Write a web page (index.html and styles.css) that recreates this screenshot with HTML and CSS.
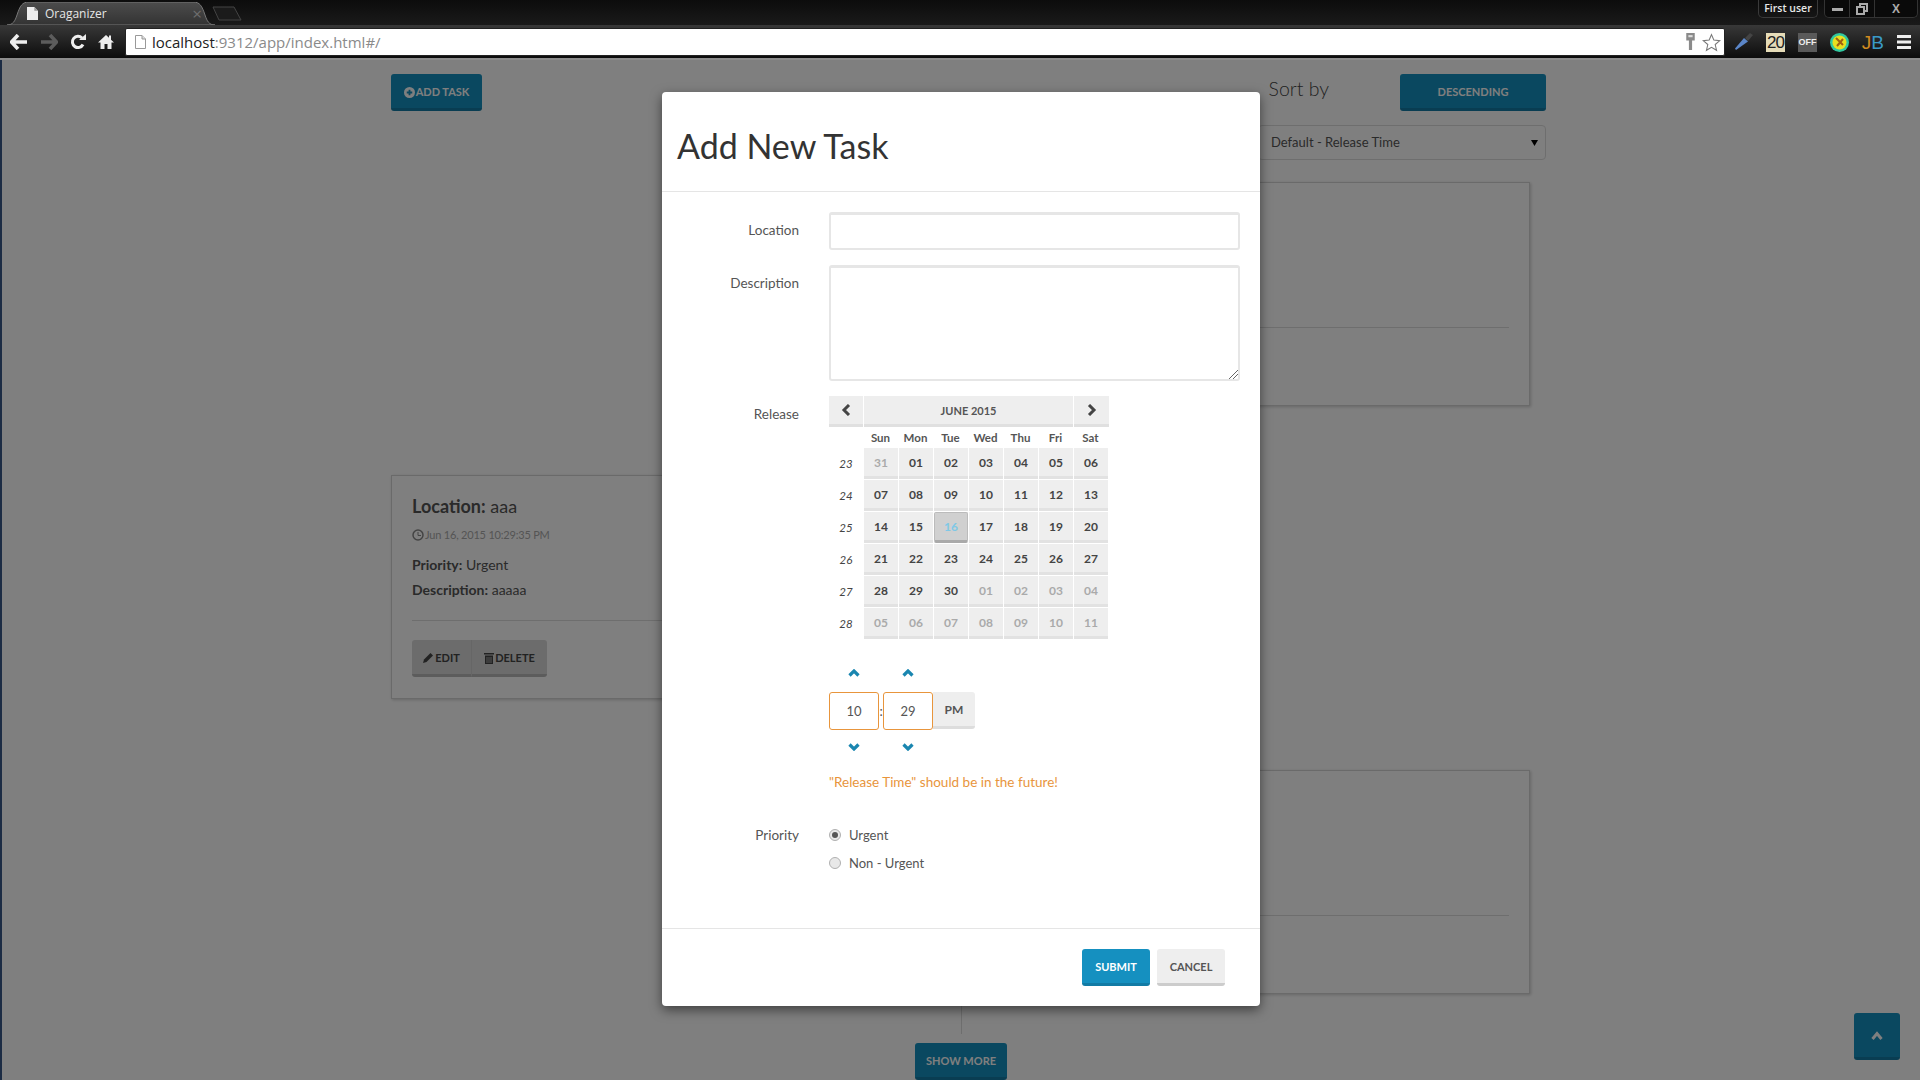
FILE: index.html
```html
<!DOCTYPE html>
<html lang="en">
<head>
    <meta charset="UTF-8">
    <title>Oraganizer</title>
    <link rel="stylesheet" href="styles.css">
</head>
<body>
    <!-- browser chrome -->
    <div class="tabstrip">
        <div class="tab">
            <svg class="tab-shape" width="208" height="23" viewBox="0 0 208 23"><path d="M0 23C6 23 8 19 10 13 13 4 15 0 22 0L186 0C193 0 195 4 198 13 200 19 202 23 208 23Z" fill="url(#tabfill)" stroke="#777"/><defs><linearGradient id="tabfill" x1="0" y1="0" x2="0" y2="1"><stop offset="0" stop-color="#4c4c4c"/><stop offset="1" stop-color="#333"/></linearGradient></defs></svg>
            <svg class="tab-icon" width="11" height="13" viewBox="0 0 12 14"><path d="M0 0H8L12 4V14H0Z" fill="#eee"/><path d="M8 0V4H12" fill="#999"/></svg>
            <span class="tab-title">Oraganizer</span>
            <span class="tab-close">×</span>
        </div>
        <svg class="newtab" width="30" height="15" viewBox="0 0 30 15"><path d="M1 1H22L29 14H7Z" fill="#1b1b1b" stroke="#444"/></svg>
        <div class="user-btn">First user</div>
        <div class="win-btns">
            <span class="win-btn min"><svg width="11" height="4" viewBox="0 0 11 4"><rect width="11" height="3" y="1" fill="#aaa"/></svg></span>
            <span class="win-btn max"><svg width="12" height="12" viewBox="0 0 12 12"><path d="M1 4H8V11H1ZM4 4V1H11V8H8" fill="none" stroke="#aaa" stroke-width="2"/></svg></span>
            <span class="win-btn close">X</span>
        </div>
    </div>
    <div class="toolbar">
        <div class="nav-icons">
            <svg width="18" height="16" viewBox="0 0 18 16"><path d="M8 1L1.500 8 8 15M2 8H17" fill="none" stroke="#eee" stroke-width="3.600"/></svg>
            <svg width="18" height="16" viewBox="0 0 18 16"><path d="M10 1L16.500 8 10 15M16 8H1" fill="none" stroke="#5c5c5c" stroke-width="3.600"/></svg>
            <svg width="16" height="16" viewBox="0 0 16 16"><path d="M13 10.500A5.600 5.600 0 1 1 12 4" fill="none" stroke="#eee" stroke-width="3"/><path d="M9 6H16V0Z" fill="#eee"/></svg>
            <svg width="16" height="16" viewBox="0 0 16 16"><path d="M8 1L0 8.500H2.500V15H6.500V10H9.500V15H13.500V8.500H16L13 5.700V1.500H11V3.800Z" fill="#eee"/></svg>
        </div>
        <div class="addressbar">
            <svg width="11" height="14" viewBox="0 0 11 14"><path d="M.5.500H7L10.500 4V13.500H.5Z" fill="#fff" stroke="#999"/><path d="M7 .5V4H10.500" fill="#ddd" stroke="#999"/></svg>
            <span class="url"><span class="url-host">localhost</span>:9312/app/index.html#/</span>
            <svg class="key" width="11" height="18" viewBox="0 0 10 17"><path d="M1 0H9V7H6.500V16H3.500V7H1Z" fill="#8a8a8a"/><rect x="3" y="2" width="4" height="2" fill="#ddd"/></svg>
            <svg width="19" height="19" viewBox="0 0 18 18"><path d="M9 1.500L11.200 6.700 16.800 7.200 12.500 10.900 13.800 16.400 9 13.500 4.200 16.400 5.500 10.900 1.200 7.200 6.800 6.700Z" fill="#fff" stroke="#777"/></svg>
        </div>
        <div class="ext-icons">
            <svg width="18" height="18" viewBox="0 0 18 18"><path d="M1 17L0 15.500 9 5 13 8.500Z" fill="#5b86c8"/><path d="M10 5L15 0 18 2 13 8Z" fill="#444"/></svg>
            <span class="ext-20">20</span>
            <span class="ext-off">OFF</span>
            <svg width="19" height="19" viewBox="0 0 19 19"><circle cx="9.500" cy="9.500" r="9.500" fill="#30c8a0"/><circle cx="9.500" cy="9.500" r="7" fill="#e8e020"/><path d="M6 5L13 12M13 6L7 13" stroke="#a06010" stroke-width="2"/></svg>
            <span class="ext-jb"><span class="j">J</span><span class="b">B</span></span>
            <svg width="14" height="14" viewBox="0 0 14 14"><path d="M0 0H14V3H0ZM0 5.500H14V8.500H0ZM0 11H14V14H0Z" fill="#eee"/></svg>
        </div>
    </div>

    <div class="viewport">
        <!-- app behind the dialog -->
        <div class="app">
            <div class="columns">
                <div class="col-left">
                    <button class="btn btn-blue btn-add"><svg class="ico" width="11" height="11" viewBox="0 0 12 12"><circle cx="6" cy="6" r="6" fill="#fff"/><path d="M3 6H9M6 3V9" stroke="#1590c0" stroke-width="2"/></svg>ADD TASK</button>
                    <div class="card card-left">
                        <h3 class="card-title"><b>Location:</b> aaa</h3>
                        <div class="card-date"><svg class="ico" width="12" height="12" viewBox="0 0 12 12"><circle cx="6" cy="6" r="5" fill="none" stroke="#888" stroke-width="1.500"/><path d="M6 3V6.500H9" fill="none" stroke="#888"/></svg>Jun 16, 2015 10:29:35 PM</div>
                        <div class="card-line"><b>Priority:</b> Urgent</div>
                        <div class="card-line"><b>Description:</b> aaaaa</div>
                        <hr class="card-rule">
                        <div class="btn-group">
                            <button class="btn btn-grey"><svg class="ico" width="11" height="11" viewBox="0 0 11 11"><path d="M0 11L1 7.500 7.500 1 10 3.500 3.500 10Z" fill="#444"/></svg>EDIT</button>
                            <button class="btn btn-grey"><svg class="ico" width="10" height="12" viewBox="0 0 10 12"><path d="M0 1H10V2.500H0ZM1 3.500H9V12H1Z" fill="#444"/><path d="M3 5V11M5 5V11M7 5V11" stroke="#ddd" stroke-width=".7"/></svg>DELETE</button>
                        </div>
                    </div>
                </div>
                <div class="col-right">
                    <div class="sort-row">
                        <span class="sort-label">Sort by</span>
                        <button class="btn btn-blue btn-sort">DESCENDING</button>
                    </div>
                    <div class="sort-select">Default - Release Time<svg class="sort-arrow" width="7" height="6" viewBox="0 0 7 6"><path d="M0 0H7L3.500 6Z"/></svg></div>
                    <div class="card card-right"><hr class="card-rule"></div>
                    <div class="card card-right card-second"><hr class="card-rule"></div>
                </div>
            </div>
            <div class="more">
                <div class="more-line"></div>
                <button class="btn btn-blue btn-more">SHOW MORE</button>
            </div>
        </div>
        <button class="btn btn-blue btn-top"><svg width="12" height="9" viewBox="0 0 12 9"><path d="M1.500 8L6 2.500 10.500 8" fill="none" stroke="#fff" stroke-width="3"/></svg></button>
        <div class="overlay"></div>

        <!-- dialog -->
        <div class="modal">
            <div class="modal-header"><h1 class="modal-title">Add New Task</h1></div>
            <div class="modal-body">
                <div class="field">
                    <label class="field-label">Location</label>
                    <input class="input input-line" type="text">
                </div>
                <div class="field">
                    <label class="field-label">Description</label>
                    <div class="textarea"><svg class="grip" width="9" height="9" viewBox="0 0 9 9"><path d="M0 9L9 0M4 9L9 4" stroke="#666"/></svg></div>
                </div>
                <div class="field">
                    <label class="field-label">Release</label>
                    <div class="release">
                        <div class="cal">
                            <div class="cal-nav"><svg width="10" height="12" viewBox="0 0 10 12"><path d="M8 1L3 6 8 11" fill="none" stroke="#444" stroke-width="3"/></svg></div>
                            <div class="cal-nav cal-month">JUNE 2015</div>
                            <div class="cal-nav"><svg width="10" height="12" viewBox="0 0 10 12"><path d="M2 1L7 6 2 11" fill="none" stroke="#444" stroke-width="3"/></svg></div>
                        </div>
                        <div class="cal-grid">
                            <span></span><span class="dow">Sun</span><span class="dow">Mon</span><span class="dow">Tue</span><span class="dow">Wed</span><span class="dow">Thu</span><span class="dow">Fri</span><span class="dow">Sat</span>
                            <span class="wk">23</span><span class="day off">31</span><span class="day">01</span><span class="day">02</span><span class="day">03</span><span class="day">04</span><span class="day">05</span><span class="day">06</span>
                            <span class="wk">24</span><span class="day">07</span><span class="day">08</span><span class="day">09</span><span class="day">10</span><span class="day">11</span><span class="day">12</span><span class="day">13</span>
                            <span class="wk">25</span><span class="day">14</span><span class="day">15</span><span class="day today">16</span><span class="day">17</span><span class="day">18</span><span class="day">19</span><span class="day">20</span>
                            <span class="wk">26</span><span class="day">21</span><span class="day">22</span><span class="day">23</span><span class="day">24</span><span class="day">25</span><span class="day">26</span><span class="day">27</span>
                            <span class="wk">27</span><span class="day">28</span><span class="day">29</span><span class="day">30</span><span class="day off">01</span><span class="day off">02</span><span class="day off">03</span><span class="day off">04</span>
                            <span class="wk">28</span><span class="day off">05</span><span class="day off">06</span><span class="day off">07</span><span class="day off">08</span><span class="day off">09</span><span class="day off">10</span><span class="day off">11</span>
                        </div>
                        <div class="time">
                            <span class="time-arrow"><svg width="12" height="8" viewBox="0 0 12 8"><path d="M1.500 6.500L6 2 10.500 6.500" fill="none" stroke="#1a86b0" stroke-width="3.200"/></svg></span>
                            <span></span>
                            <span class="time-arrow"><svg width="12" height="8" viewBox="0 0 12 8"><path d="M1.500 6.500L6 2 10.500 6.500" fill="none" stroke="#1a86b0" stroke-width="3.200"/></svg></span>
                            <span></span>
                            <span class="time-box">10</span>
                            <span class="time-sep">:</span>
                            <span class="time-box">29</span>
                            <span class="time-pm">PM</span>
                            <span class="time-arrow"><svg width="12" height="8" viewBox="0 0 12 8"><path d="M1.500 1.500L6 6 10.500 1.500" fill="none" stroke="#1a86b0" stroke-width="3.200"/></svg></span>
                            <span></span>
                            <span class="time-arrow"><svg width="12" height="8" viewBox="0 0 12 8"><path d="M1.500 1.500L6 6 10.500 1.500" fill="none" stroke="#1a86b0" stroke-width="3.200"/></svg></span>
                            <span></span>
                        </div>
                        <div class="time-error">"Release Time" should be in the future!</div>
                    </div>
                </div>
                <div class="field field-priority">
                    <label class="field-label">Priority</label>
                    <div class="radios">
                        <div class="radio-row"><span class="radio checked"></span>Urgent</div>
                        <div class="radio-row"><span class="radio"></span>Non - Urgent</div>
                    </div>
                </div>
            </div>
            <div class="modal-footer">
                <button class="btn btn-blue btn-foot">SUBMIT</button>
                <button class="btn btn-light btn-foot">CANCEL</button>
            </div>
        </div>
    </div>
</body>
</html>
```
FILE: styles.css
```css
* {
    box-sizing: border-box;
}
html, body {
    margin: 0;
    padding: 0;
    height: 100%;
    overflow: hidden;
}
body {
    font-family: Lato, "Open Sans", sans-serif;
    font-size: 13px;
    color: #555;
    background: #000;
}
svg {
    display: block;
}

/* browser chrome */
.tabstrip {
    position: relative;
    display: flex;
    align-items: flex-start;
    height: 25px;
    padding-left: 7px;
    background: linear-gradient(#0c0c0c, #1a1a1a);
    color: #eee;
}
.tab {
    position: relative;
    display: flex;
    align-items: center;
    width: 208px;
    height: 23px;
    margin-top: 2px;
    padding-left: 20px;
    font-family: "Open Sans", sans-serif;
    font-size: 12px;
    color: #e6e6e6;
}
.tab-shape {
    position: absolute;
    left: 0;
    top: 0;
}
.tab-icon {
    position: relative;
    margin-right: 7px;
}
.tab-title {
    position: relative;
    flex: 1;
}
.tab-close {
    position: relative;
    margin-right: 13px;
    font-size: 17px;
    line-height: 1;
    color: #6e6e6e;
}
.newtab {
    margin: 6px 0 0 -3px;
}
.user-btn {
    margin-left: auto;
    width: 60px;
    height: 18px;
    border: 1px solid #3a3a3a;
    border-top: none;
    border-radius: 0 0 5px 5px;
    font-family: "Open Sans", sans-serif;
    font-size: 10.500px;
    font-weight: 600;
    line-height: 16px;
    text-align: center;
    color: #e8e8e8;
}
.win-btns {
    display: flex;
    margin: 0 2px 0 6px;
    height: 18px;
    border: 1px solid #333;
    border-top: none;
    border-radius: 0 0 5px 5px;
    background: #0a0a0a;
}
.win-btn {
    display: flex;
    align-items: center;
    justify-content: center;
    height: 17px;
    border-right: 1px solid #333;
}
.win-btn.min, .win-btn.max {
    width: 25px;
}
.win-btn.close {
    width: 42px;
    border-right: none;
    font-family: "Liberation Sans", sans-serif;
    font-size: 12px;
    font-weight: 700;
    color: #aaa;
}
.toolbar {
    display: flex;
    align-items: center;
    height: 35px;
    padding-top: 1px;
    border-bottom: 2px solid #8c8c8c;
    background: linear-gradient(#383838, #0c0c0c);
}
.nav-icons {
    display: flex;
    align-items: center;
    gap: 12px;
    width: 125px;
    padding-left: 10px;
}
.addressbar {
    display: flex;
    align-items: center;
    width: 1600px;
    height: 28px;
    padding: 0 3px 0 9px;
    border: 1px solid #222;
    border-radius: 2px;
    background: #fff;
}
.url {
    flex: 1;
    margin-left: 6px;
    font-family: "Open Sans", sans-serif;
    font-size: 15px;
    color: #8a8a8a;
}
.url-host {
    color: #222;
}
.key {
    margin-right: 6px;
}
.ext-icons {
    display: flex;
    align-items: center;
    justify-content: space-between;
    flex: 1;
    padding: 0 9px 0 10px;
}
.ext-20 {
    width: 19px;
    height: 19px;
    background: #e6dcb8;
    font-family: "Liberation Sans", sans-serif;
    font-size: 17px;
    line-height: 19px;
    text-align: center;
    letter-spacing: -1px;
    color: #222;
}
.ext-off {
    width: 19px;
    height: 19px;
    background: #5a5a5a;
    font-family: "Liberation Sans", sans-serif;
    font-size: 9px;
    font-weight: 700;
    line-height: 19px;
    text-align: center;
    color: #eee;
}
.ext-jb {
    font-family: "Liberation Sans", sans-serif;
    font-size: 19px;
    line-height: 19px;
}
.ext-jb .j {
    color: #d08a20;
}
.ext-jb .b {
    color: #3a9ac8;
}

/* page under the dialog */
.viewport {
    position: relative;
    height: 1020px;
    border-left: 2px solid #1c2c44;
    background: #fff;
    overflow: hidden;
}
.app {
    width: 1155px;
    margin-left: 389px;
    padding-top: 14px;
}
.columns {
    display: flex;
    justify-content: space-between;
}
.col-left {
    width: 560px;
}
.col-right {
    display: flex;
    flex-direction: column;
    width: 566px;
}
.btn {
    border: none;
    border-bottom: 3px solid rgba(0, 0, 0, 0.14);
    border-radius: 3px;
    font-family: Lato, sans-serif;
    font-size: 11px;
    font-weight: 700;
    padding: 1px 0 0;
}
.btn-blue {
    background: #1590c0;
    color: #fff;
}
.btn-light {
    background: #eee;
    color: #555;
}
.btn-grey {
    display: flex;
    align-items: center;
    justify-content: center;
    background: #d8d8d8;
    color: #444;
}
.ico {
    display: inline-block;
    vertical-align: -2px;
    margin-right: 1px;
}
.btn-add {
    width: 91px;
    height: 37px;
}
.sort-row {
    display: flex;
    justify-content: flex-end;
    align-items: center;
    height: 37px;
}
.sort-label {
    margin-right: 71px;
    padding-bottom: 8px;
    font-size: 19.500px;
    font-weight: 300;
    color: #444;
}
.btn-sort {
    width: 146px;
    height: 37px;
}
.sort-select {
    display: flex;
    align-items: center;
    justify-content: space-between;
    align-self: flex-end;
    width: 288px;
    height: 35px;
    margin-top: 14px;
    padding: 0 7px 2px 12px;
    border: 1px solid #ddd;
    border-radius: 4px;
    font-size: 13px;
    color: #555;
}
.sort-arrow {
    margin-top: 2px;
}
.card {
    border: 1px solid #d4d4d4;
    box-shadow: 1px 1px 3px rgba(0, 0, 0, 0.2);
}
.card-left {
    height: 224px;
    margin-top: 364px;
    padding: 19px 20px;
}
.card-right {
    position: relative;
    height: 224px;
    margin: 22px 16px 0 0;
    padding: 144px 20px 0;
}
.card-second {
    margin-top: 364px;
}
.card-title {
    margin: 0;
    font-size: 18px;
    font-weight: 400;
    line-height: 22px;
    color: #555;
}
.card-date {
    margin: 10px 0 9px;
    font-size: 11px;
    letter-spacing: -0.2px;
    line-height: 16px;
    color: #aaa;
}
.card-line {
    font-size: 14px;
    line-height: 25px;
    color: #555;
}
.card-rule {
    margin: 0;
    border: none;
    border-top: 1px solid #ddd;
}
.card-left .card-rule {
    margin-top: 18px;
}
.btn-group {
    display: flex;
    width: 135px;
    margin-top: 19px;
}
.btn-group .btn {
    height: 37px;
}
.btn-group .btn:first-child {
    width: 60px;
    border-radius: 3px 0 0 3px;
    border-right: 1px solid #ccc;
}
.btn-group .btn:last-child {
    width: 75px;
    border-radius: 0 3px 3px 0;
}
.more {
    display: flex;
    flex-direction: column;
    align-items: center;
    padding-right: 15px;
}
.more-line {
    width: 1px;
    height: 40px;
    background: #ddd;
}
.btn-more {
    width: 92px;
    height: 37px;
    margin-top: 9px;
}
.btn-top {
    position: absolute;
    left: 1852px;
    top: 953px;
    display: flex;
    align-items: center;
    justify-content: center;
    width: 46px;
    height: 47px;
}
.overlay {
    position: absolute;
    inset: 0;
    background: rgba(0, 0, 0, 0.5);
}

/* dialog */
.modal {
    position: absolute;
    left: 660px;
    top: 32px;
    width: 598px;
    height: 914px;
    display: flex;
    flex-direction: column;
    border-radius: 4px;
    background: #fff;
    box-shadow: 0 4px 12px rgba(0, 0, 0, 0.5);
}
.modal-header {
    height: 100px;
    padding: 29px 15px 0;
    border-bottom: 1px solid #e5e5e5;
}
.modal-title {
    margin: 0;
    font-size: 34px;
    font-weight: 400;
    line-height: 50px;
    color: #333;
}
.modal-body {
    flex: 1;
    padding-top: 20px;
}
.field {
    display: flex;
    margin-bottom: 15px;
}
.field-label {
    width: 137px;
    margin-right: 30px;
    padding-top: 9px;
    font-size: 13.500px;
    line-height: 18px;
    text-align: right;
    color: #555;
}
.input-line {
    display: block;
    width: 411px;
    height: 38px;
    border: 2px solid #e6e6e6;
    border-top-width: 3px;
    border-radius: 3px;
    outline: none;
}
.textarea {
    position: relative;
    width: 411px;
    height: 116px;
    border: 2px solid #e6e6e6;
    border-top-width: 3px;
    border-radius: 3px;
}
.grip {
    position: absolute;
    right: 0;
    bottom: 0;
}
.release {
    width: 411px;
}
.cal {
    display: grid;
    grid-template-columns: 34px 209px 35px;
    gap: 1px;
}
.cal-nav {
    display: flex;
    align-items: center;
    justify-content: center;
    height: 31px;
    border-bottom: 3px solid #e0e0e0;
    background: #eee;
}
.cal-month {
    font-size: 11px;
    font-weight: 700;
    color: #555;
}
.cal-grid {
    display: grid;
    grid-template-columns: 34px repeat(7, 35px);
    grid-auto-rows: 32px;
    grid-template-rows: 21px;
}
.dow {
    display: flex;
    align-items: center;
    justify-content: center;
    font-size: 11.500px;
    font-weight: 700;
    color: #555;
}
.wk {
    display: flex;
    align-items: center;
    justify-content: center;
    padding-bottom: 2px;
    font-size: 11.500px;
    font-style: italic;
    color: #444;
}
.day {
    display: flex;
    align-items: center;
    justify-content: center;
    margin: 0 0 1px 1px;
    border-bottom: 3px solid #e2e2e2;
    background: #eee;
    font-size: 12px;
    font-weight: 700;
    color: #444;
}
.day.off {
    color: #aaa;
}
.day.today {
    border: 1px solid #bbb;
    border-bottom: 3px solid #aaa;
    border-radius: 2px;
    background: #d0d0d0;
    color: #7fc8e6;
}
.time {
    display: grid;
    grid-template-columns: 50px 4px 50px 42px;
    grid-template-rows: 52px 38px 30px;
}
.time-arrow {
    display: flex;
    align-items: flex-end;
    justify-content: center;
    padding-bottom: 15px;
}
.time-arrow:nth-child(n+9) {
    align-items: flex-start;
    padding: 13px 0 0;
}
.time-box {
    display: flex;
    align-items: center;
    justify-content: center;
    border: 1px solid #e8953c;
    border-radius: 3px;
    font-size: 13px;
    color: #555;
}
.time-sep {
    text-align: center;
    line-height: 38px;
    color: #555;
}
.time-pm {
    display: flex;
    align-items: center;
    justify-content: center;
    height: 37px;
    border-bottom: 3px solid #ddd;
    border-radius: 0 3px 3px 0;
    background: #eee;
    font-size: 12px;
    font-weight: 700;
    color: #555;
}
.time-error {
    margin-top: 13px;
    font-size: 13.500px;
    line-height: 18px;
    color: #e8953c;
}
.field-priority {
    margin-top: 35px;
    margin-bottom: 0;
}
.field-priority .field-label {
    padding-top: 0;
}
.radio-row {
    display: flex;
    align-items: center;
    height: 18px;
    margin-bottom: 10px;
    font-size: 13px;
    color: #555;
}
.radio {
    position: relative;
    width: 12px;
    height: 12px;
    margin-right: 8px;
    border: 1px solid #b0b0b0;
    border-radius: 50%;
    background: #e8e8e8;
}
.radio.checked::after {
    content: "";
    position: absolute;
    left: 2px;
    top: 2px;
    width: 6px;
    height: 6px;
    border-radius: 50%;
    background: #555;
}
.modal-footer {
    display: flex;
    justify-content: flex-end;
    gap: 7px;
    height: 78px;
    padding: 20px 35px 0 0;
    border-top: 1px solid #e5e5e5;
}
.btn-foot {
    width: 68px;
    height: 37px;
}
```
